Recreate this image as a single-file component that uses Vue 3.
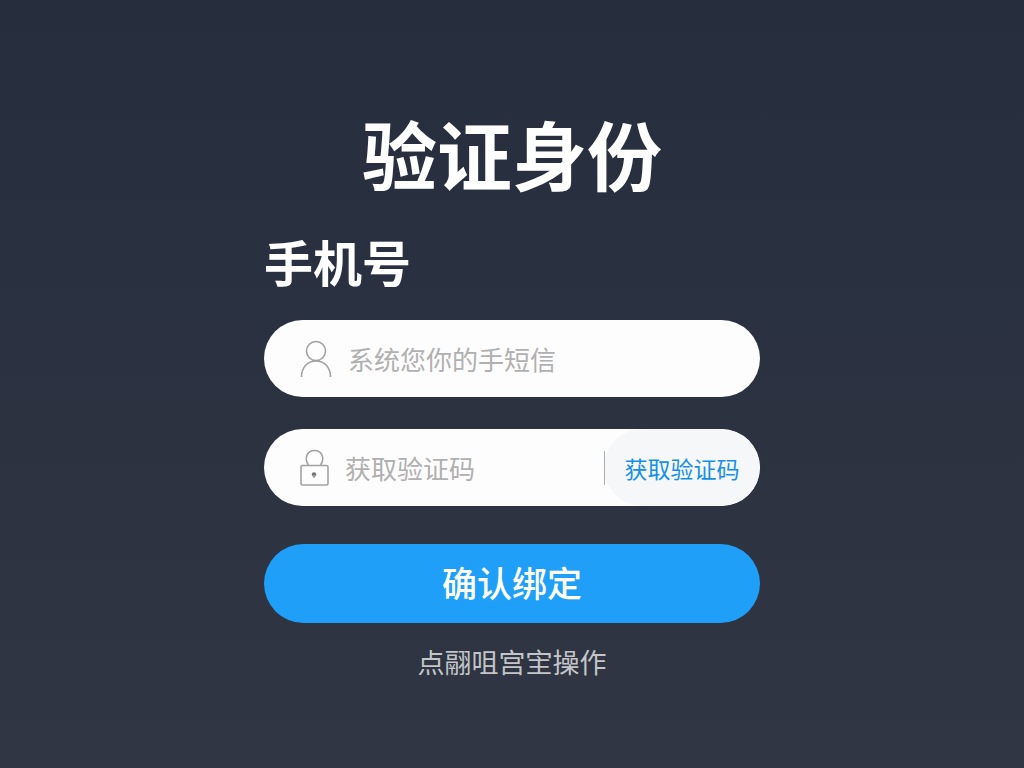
<script setup>
import { ref } from 'vue'

const phone = ref('')
const code = ref('')
</script>

<template>
  <main class="page">
    <form class="card" @submit.prevent>
      <h1 class="title">验证身份</h1>
      <label class="label" for="phone">手机号</label>

      <div class="field">
        <svg class="icon" viewBox="0 0 32 38" aria-hidden="true">
          <circle cx="16" cy="11" r="9.5" />
          <path d="M1.5 37C1.5 27 8 21 16 21s14.500 6 14.500 16" />
        </svg>
        <input id="phone" v-model="phone" type="tel" placeholder="系统您你的手短信" />
      </div>

      <div class="field code-field">
        <svg class="icon lock" viewBox="0 0 29 38" aria-hidden="true">
          <path d="M8.500 16C3.500 9 7.500 1.500 14.500 1.500S25.500 9 20.500 16" />
          <rect x="1" y="16.500" width="27" height="19.500" rx="1.500" />
          <circle class="dot" cx="14" cy="25.500" r="2.200" />
          <path d="M14 26v3" />
        </svg>
        <input v-model="code" type="text" placeholder="获取验证码" aria-label="获取验证码" />
        <button class="send" type="button">获取验证码</button>
      </div>

      <button class="submit" type="submit">确认绑定</button>
      <p class="hint">点翮咀宫宔操作</p>
    </form>
  </main>
</template>

<style>
body {
  margin: 0;
  background: #2d3442;
}
</style>

<style scoped>
.page {
  box-sizing: border-box;
  min-height: 100vh;
  padding: 99px 24px 24px;
  background: linear-gradient(#262d3d, #303643);
  font-family: "Noto Sans CJK SC", sans-serif;
}

.card {
  display: flex;
  flex-direction: column;
  max-width: 496px;
  margin: 0 auto;
}

.title {
  margin: 0;
  color: #fff;
  font-size: 75px;
  font-weight: 700;
  line-height: 108px;
  text-align: center;
}

.label {
  margin: 18px 0 23px;
  color: #fff;
  font-size: 49px;
  font-weight: 700;
  line-height: 72px;
}

.field {
  display: flex;
  align-items: center;
  box-sizing: border-box;
  height: 77px;
  margin-bottom: 32px;
  padding-left: 36px;
  overflow: hidden;
  border-radius: 39px;
  background: #fdfdfd;
}

.icon {
  flex: none;
  width: 32px;
  height: 38px;
  fill: none;
  stroke: #a2a2a2;
  stroke-width: 1.6;
}

.lock {
  width: 29px;
}

.icon .dot {
  fill: #777;
  stroke: none;
}

input {
  flex: 1;
  min-width: 0;
  height: 100%;
  margin-left: 16px;
  padding: 0;
  border: 0;
  outline: 0;
  background: transparent;
  color: #444;
  font: 400 26px/40px "Noto Sans CJK SC", sans-serif;
}

input::placeholder {
  color: #b0b0b0;
  opacity: 1;
}

.send {
  position: relative;
  flex: none;
  width: 156px;
  height: 100%;
  padding: 0;
  border: 0;
  border-radius: 39px;
  background: #f5f7f8;
  color: #168fe8;
  font: 400 23px/40px "Noto Sans CJK SC", sans-serif;
}

.send::before {
  position: absolute;
  top: 22px;
  bottom: 21px;
  left: 0;
  width: 1px;
  background: #a9abad;
  content: "";
}

.code-field {
  margin-bottom: 38px;
}

.submit {
  height: 79px;
  padding: 0 0 4px;
  border: 0;
  border-radius: 40px;
  background: #209ff8;
  color: #fff;
  font: 500 35px/52px "Noto Sans CJK SC", sans-serif;
}

.hint {
  margin: 19px 0 0;
  color: #c3c5c9;
  font-size: 27px;
  font-weight: 400;
  line-height: 40px;
  text-align: center;
}
</style>
